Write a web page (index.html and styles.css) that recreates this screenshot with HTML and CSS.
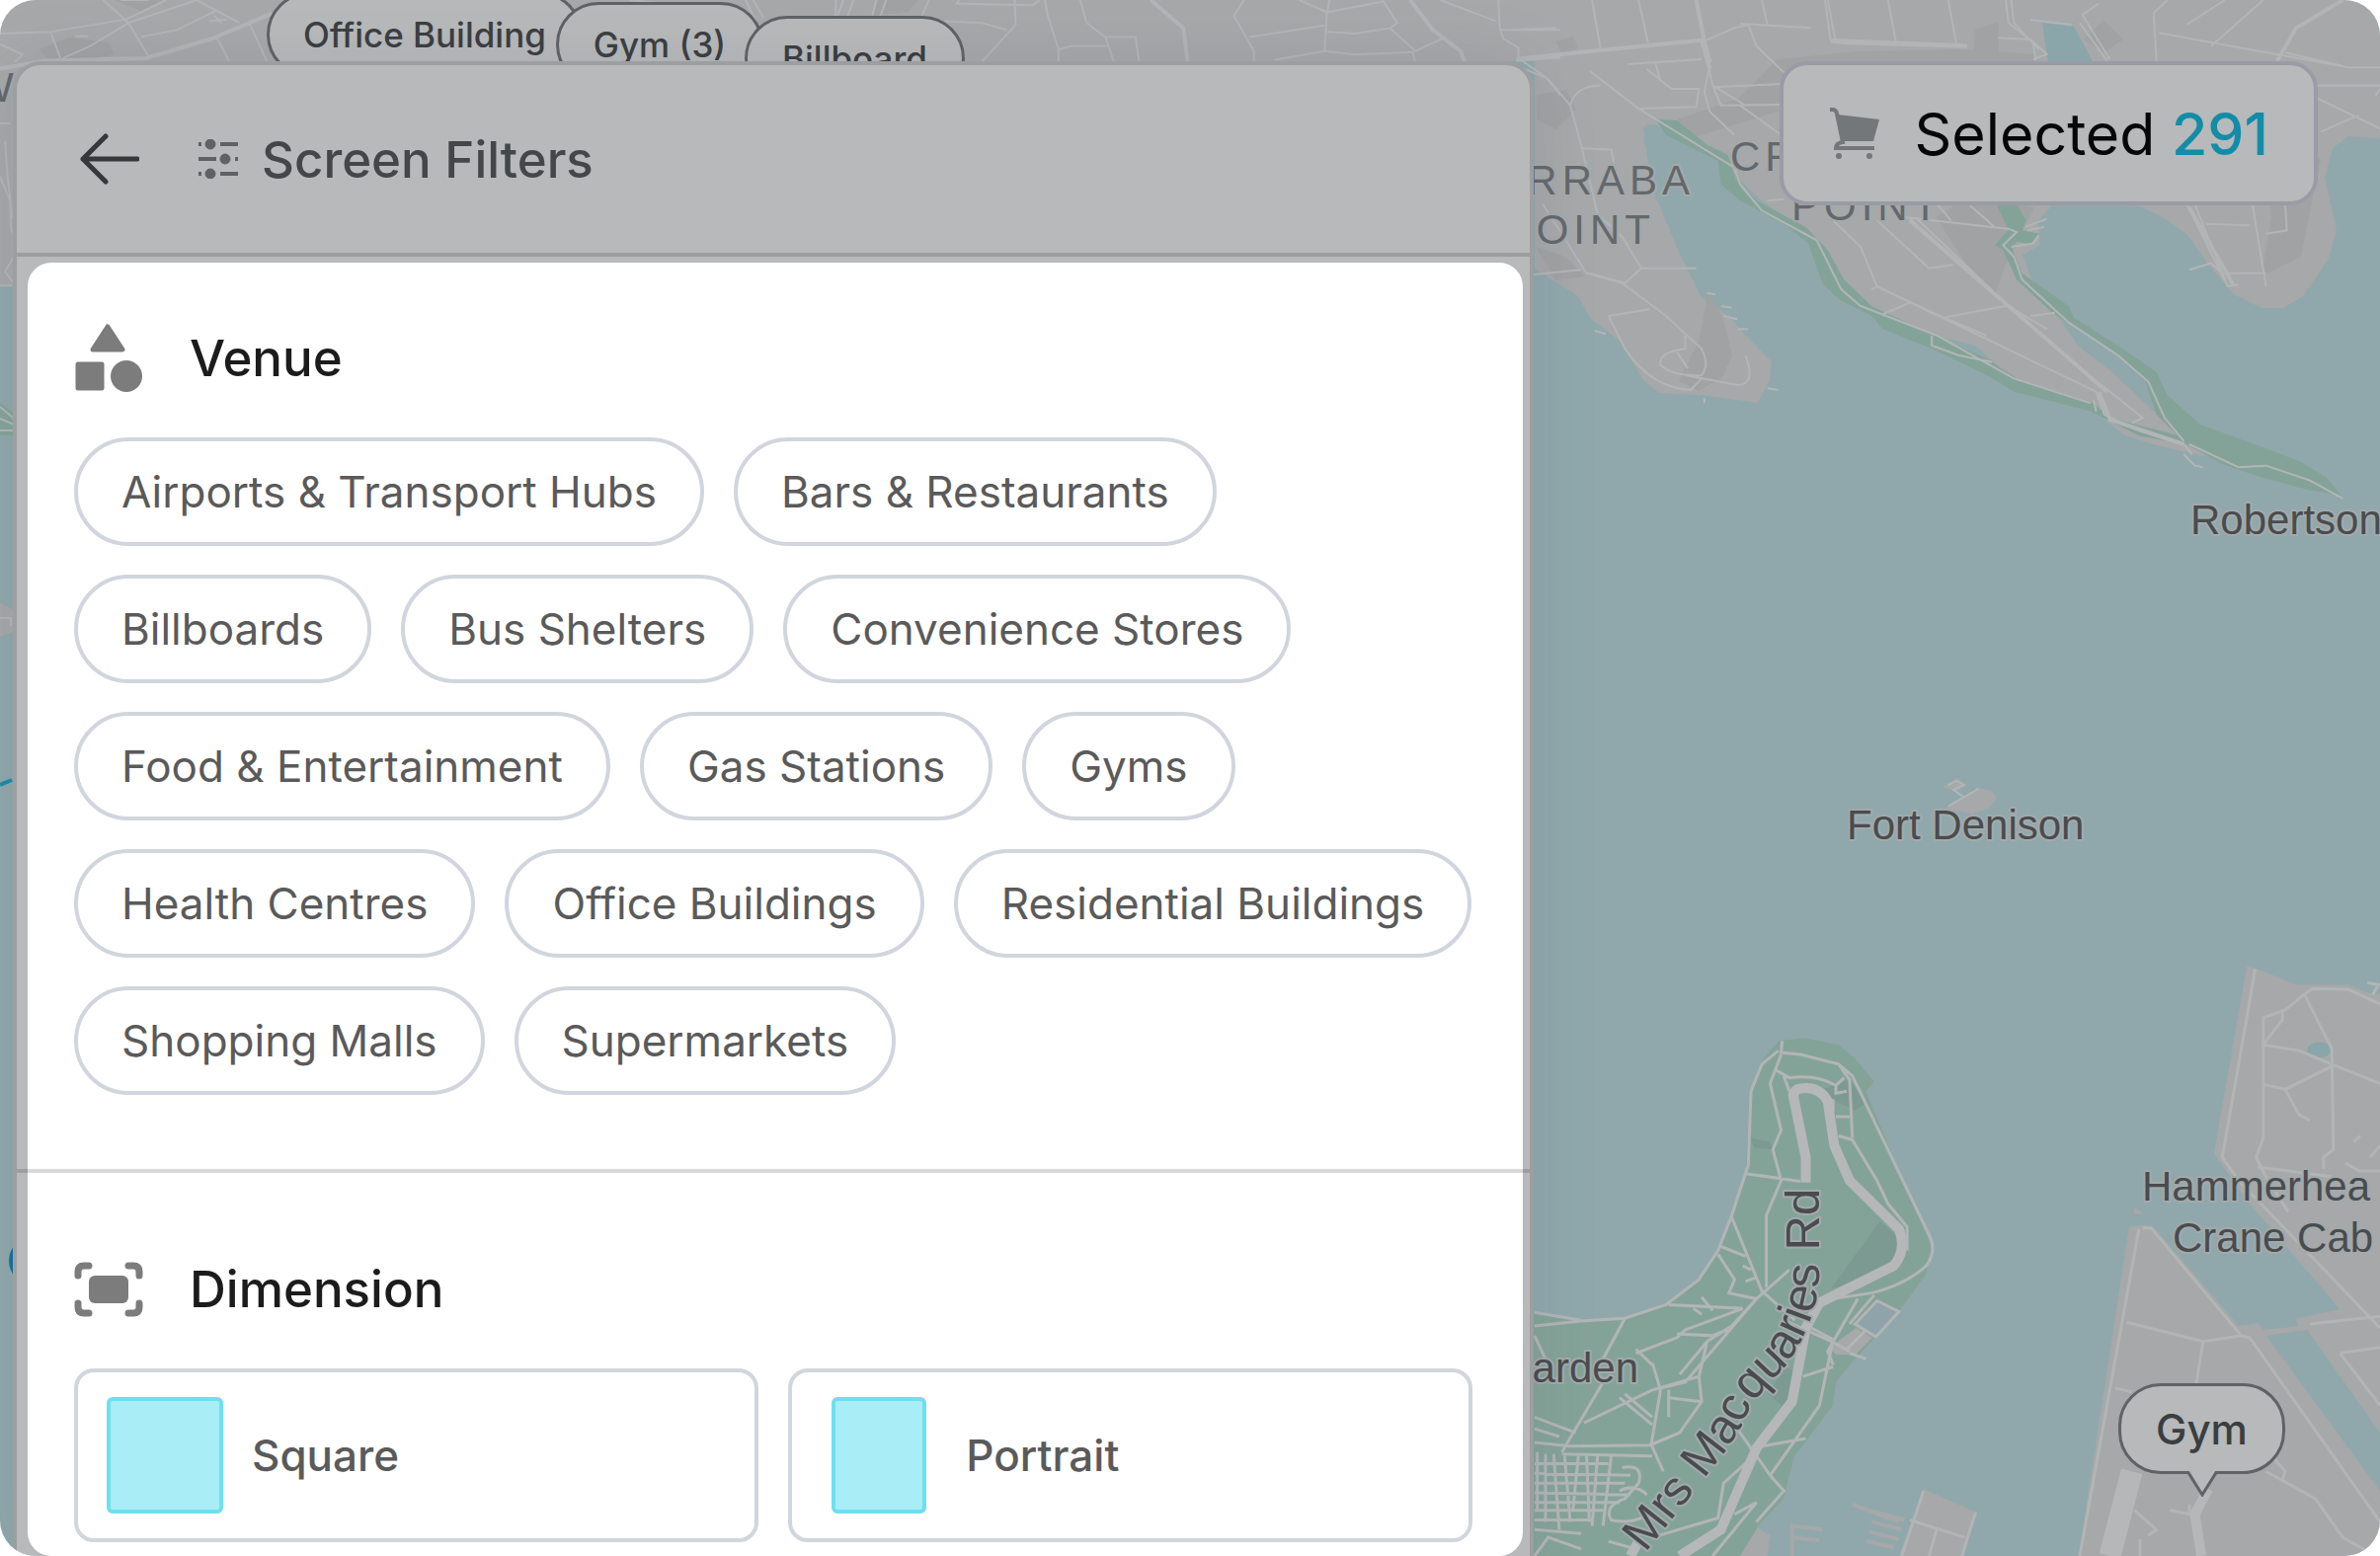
FILE: index.html
```html
<!DOCTYPE html>
<html lang="en">
<head>
<meta charset="utf-8">
<title>Screen Filters</title>
<link rel="stylesheet" href="styles.css">
</head>
<body>
<main class="stage">
  <svg class="map" viewBox="0 0 2410 1576" preserveAspectRatio="xMidYMid slice" role="img" aria-label="Harbour map">
    <rect class="water" width="2410" height="1576"/>

    <!-- north shore -->
    <path class="land" d="M0 0H2410V140L2378 138L2362 150L2354 180L2366 232L2358 262L2332 300L2312 312L2290 312L2262 298L2236 268L2215 238L2190 220L2166 209L2080 206L2063 224L2066 248L2048 258L2060 290L2085 322L2104 350L2140 378L2178 414L2200 430L2240 460L2230 462L2180 450L2150 440L2110 408L2040 385L2000 350L1908 327L1860 300L1845 265L1828 236L1780 200L1745 165L1735 150L1664 128L1668 160L1682 212L1700 255L1722 300L1750 320L1768 340L1794 365L1792 385L1780 408L1722 400L1680 398L1664 385L1640 345L1610 322L1598 300L1554 272V62H1300L14 290H0Z"/>
    <g class="shade">
      <path d="M1680 150L1700 120L1760 100L1800 60L1880 52L1990 50L2060 55L2080 80L1900 110L1810 110Z"/>
      <path d="M1730 296l14 24 10 40-10 22-24 14-20-10 20-40z"/>
      <path d="M2000 195l60 15-30 60-10 30-20-20-40-60z"/>
      <path d="M2350 160l-20 100-40 20 10-60-5-70z"/>
      <path d="M1556 96l30-5 10 20-20 20-20-10zM1555 250l30 10 20 20-30 4zM1575 42l18-5 5 12-16 6z"/>
      <path d="M2000 30l24-8 0 30-26 6zM2130 20l20 20-20 14-20-14z"/>
      <path d="M40 50l30-12 40 5 6 12-30 6-38-2zM115 0l50 0-20 12z"/>
      <path d="M890 0h40l-10 12-38 4z"/>
    </g>
    <path class="lake" d="M2068 23L2100 27L2120 64L2074 64Z"/>

    <g transform="translate(1540 0) scale(.55485 .33333)">
      <path class="water" d="M228 378L250 380L300 450L365 490L360 560L400 640L490 690L540 790L560 880L620 950L660 1000L560 1010L460 1100L455 1095L400 1000L350 900L310 810L280 700L245 600L240 480L224 430Z"/>
      <path class="park" d="M246 362L285 366L340 440L378 470L392 545L430 610L520 690L560 760L590 850L640 930L750 1015L850 1090L910 1155L1045 1225L1075 1270L1205 1325L1215 1350L1130 1325L1040 1250L900 1190L850 1140L750 1060L660 1000L640 960L580 910L550 860L525 740L480 680L400 610L365 560L360 490L300 440L265 410Z"/>
      <path class="park" d="M868 620H905L922 668L915 700L945 710L930 740L905 735L895 750L915 830L1000 930L1010 965L1090 1050L1160 1130L1180 1200L1240 1290L1340 1350L1420 1400L1470 1450L1497 1505L1440 1490L1350 1450L1280 1410L1215 1350L1160 1260L1140 1160L1075 1060L970 950L905 850L880 760L865 745L890 700Z"/>
      <g class="road">
        <path d="M0 205L50 240L90 320L110 440L140 650L185 720L220 815M40 620L120 830L185 860L265 960L330 1060Q345 1110 330 1140Q280 1145 255 1110Q250 1070 300 1060L300 1020M160 960L235 940M160 960L190 1060Q240 1180 310 1185L330 1150M410 1080Q430 1170 395 1170L300 1140M285 1070L305 1120M90 320Q100 260 145 260M110 450L165 455L170 495M20 835L110 820M125 830L190 860L220 815H320"/>
        <path d="M130 0L145 145M215 0L232 130M440 0L450 75M555 0L565 120L805 135M560 0L575 130M670 0L685 130M780 0L795 135M400 72L530 85M0 90L65 85M335 125L390 85L415 75L430 140L480 220M195 195L330 180M245 190L255 245M125 215L215 330L320 325L325 270L275 270L230 210M340 180L350 260L410 320M350 265L475 255M345 200L335 280L345 340L390 410M350 260L365 320L480 318M400 320L475 410"/>
        <path d="M215 330L390 510L400 560L440 640L540 730L585 880L620 930L760 1020L900 1150L1040 1225M450 610L480 605M570 670L620 750L650 870L640 880M650 870L770 965L885 930M655 875L1050 1190M650 670L745 815L790 805M710 665L1060 1180M720 660L890 930L960 1000M790 790L830 845M660 955L710 920L850 1020M760 620L785 670M820 625L865 690M700 660L860 690L890 695L905 705L880 745L900 780L915 850L1000 980L1090 1080L1145 1160L1175 1270L1210 1340M930 960L975 950M1060 1170L1135 1270L1115 1285M1050 1190L1065 1260L1130 1310L1210 1350L1225 1380M1045 1215L1050 1250M1220 1350L1310 1420L1360 1415L1440 1460L1500 1515"/>
        <path d="M885 0L890 70L935 130L940 185M895 0L900 70L945 150M930 60L1005 75M1020 70L1070 185M1055 10L1025 45L1045 100L1075 180M1180 0L1155 40L1160 185M1285 0L1215 75M1355 0L1260 140M1165 100L1510 205H1568M1395 160L1500 200M870 115L930 120L960 165L935 180M1455 300L1568 390M1460 400L1530 350M1450 260H1568M1560 290L1568 270M1215 620L1290 870L1310 865M1230 620L1285 850M1335 620L1360 870M1395 625L1398 700L1360 710M1250 680L1330 685M1220 820L1260 800L1280 830L1360 830M750 1020V1050L800 1080L860 1100"/>
        <path d="M920 690L960 665M925 700L955 690M895 750L935 740L945 715M340 890L355 895M365 930L385 935M370 960L395 970M395 1000H415M450 1180L470 1185M335 1210V1225M135 1005L155 1015M1210 1380L1230 1415L1245 1420"/>
      </g>
      <g class="road road-major">
        <path d="M0 178L130 155L330 122L345 210M320 0L335 125L345 190M565 125L600 130L815 140M1500 0L1415 85L1380 185"/>
        <path d="M1220 630L1300 865M710 670L1070 1190M1055 1190L1075 1275L1210 1350"/>
      </g>
    </g>

    <g transform="translate(0 0) scale(.5102 .35714)">
      <g class="road">
        <path d="M0 95L100 90L250 55L330 0M205 0L255 65L180 130L125 165M255 65L295 160M255 65L390 0L475 65M280 105L350 85L430 30M100 90L120 165M295 0H240M430 105L455 175M495 65L530 175M0 125L45 155L30 175M150 103H175M415 60L450 55M425 45L440 65M0 350H20M10 400L15 500L25 620M0 500L20 570L22 650L40 700L10 770L25 800M0 810H25M1480 0L1500 60M1495 0L1515 50M1250 0L1300 8"/>
      </g>
      <path class="road road-major" d="M0 195L90 172L290 165L420 110L540 38"/>
    </g>
    <g transform="translate(780 0) scale(.5102 .35714)">
      <g class="road">
        <path d="M130 0V40L120 70M145 0L130 60M210 0L200 60M165 0L150 60M230 0L215 60M315 0L295 65M485 0L487 70L420 175M375 0L370 10L520 15L535 0M345 60L420 65L470 85M545 0L550 40L572 140V175M615 0L628 65L665 105L682 175M665 105H725L732 175M572 140L600 130H670M940 0L920 45L960 145V175M950 105L1100 72M1050 0L1105 35L1100 145L1000 170M1110 0L1105 35L1215 5M1105 90L1160 95L1230 80L1280 145L1340 105M1100 145L1160 155L1275 148L1280 175M1215 0L1245 65L1230 80M1330 0L1440 60M1445 0L1448 80L1455 110L1485 135V170M1450 85H1568M1490 170L1540 220L1568 270"/>
      </g>
      <g class="road road-major"><path d="M755 0L820 80L828 175M1270 0L1315 85L1370 145L1378 175M1480 170L1568 160"/></g>
    </g>

    <!-- Fort Denison -->
    <g transform="translate(1540 500) scale(.55485 .33333)">
      <path class="land" d="M770 890L797 865L815 885L795 905ZM775 955L835 892L860 905L868 925L855 955L825 975Z"/>
      <path class="road" d="M780 885L795 872L808 885L790 900L808 922M780 950L835 897"/>
    </g>

    <!-- Botanic garden, Macquarie point and Garden Island -->
    <g transform="translate(1540 960) scale(.55485 .39286)">
      <path class="park" d="M0 940L110 960L190 955L265 915L325 850L360 780L385 690L410 580L418 370L440 290L470 240L520 232L580 250L610 285L645 345L630 370L680 540L750 770L740 840L695 930L610 1060L575 1120L570 1180L500 1310L490 1360L480 1420L430 1495L440 1568H0Z"/>
      <path class="park-dark" d="M655 705L700 760L690 820L565 880ZM420 490l35 10 5 20-35-5zM450 1150l35-70 20 20-20 90zM540 370l60-30 30 60-20 20z"/>
      <path class="land" d="M400 1568L432 1495L455 1515L450 1568ZM735 1395L830 1455L805 1568H690ZM563 1030L612 980L642 1005L610 1050L575 1048ZM1325 48L1340 52L1415 95L1510 95L1545 115L1568 120V1250L1435 985L1360 1000L1568 1400V1568H1018L1110 720L1135 715L1155 720L1310 975L1345 968L1360 992L1420 978L1415 955L1495 932L1330 660L1265 530Z"/>
      <path class="land" d="M1120 670L1137 685L1118 687Z"/>
      <ellipse class="lake" cx="1457" cy="263" rx="22" ry="20"/>
      <path class="pool" d="M650 910L690 938L648 1003L610 970Z"/>
      <g class="road road-path">
        <path d="M477 240L475 270L510 275L580 300L605 330L745 740Q760 780 740 820Q700 870 640 890L545 910M470 265L440 300L420 370L415 560L385 690L360 780L325 855L265 920L190 955L110 962L25 975M475 275L455 350L475 470L460 520L475 600L448 690V875M25 940L110 960M465 315L490 335Q540 325 575 355L590 335M480 330L490 370M580 300L600 340L605 490M575 355L575 375L595 370M570 390V420M575 435H600M580 485L605 495L650 600L670 660L705 720V780M410 582L510 602M385 695L440 885L500 960M360 790L390 855L380 890L430 905L490 830M365 770L410 795M270 920L405 930M430 905L385 975L340 1015L290 1100M190 955L150 1060M405 930L300 985L285 1005L210 1045M285 995L350 1000L385 980M430 905L300 1120L240 1140L115 1225M340 1015L325 1105L330 1170L290 1250L240 1280M240 1070L255 1140L238 1280L260 1350M150 1120L75 1300M180 1160L240 1230M190 1150L240 1210M210 1035L240 1075M325 1105L240 1140M330 1170L270 1160M270 1140V1210M480 960L560 1010L600 1040M530 980L570 1010L545 1180L510 1250L455 1360L480 1400L430 1480M615 905L560 1040L570 1075M645 895L600 970M515 1105L570 1080M440 1285L520 1265M395 1240L460 1370M425 1310L370 1380L360 1470L240 1520M390 1460L430 1430L350 1568M25 1000L45 1060M25 1210L100 1250M25 1240L70 1260M25 1275L90 1285L235 1282L290 1250M75 1305L240 1310M330 900L350 935M405 820L420 830M410 860L430 850M315 930L330 945"/>
        <path d="M30 1300V1450M45 1305V1480M60 1305L70 1500M80 1310L90 1480M105 1310L95 1450M120 1310L125 1480M140 1310L130 1490M165 1310L150 1490M25 1330H160M25 1355L200 1360M25 1380H190M25 1405L200 1410M25 1430H180M25 1450H150M25 1475H130M25 1500L110 1510M185 1340Q225 1330 215 1380L190 1420Q150 1440 165 1475Q210 1490 240 1450M180 1400Q210 1380 230 1410M25 1568L50 1520L110 1550M160 1530L210 1550"/>
        <path d="M650 910L690 938L648 1003L610 970ZM595 1035L630 985M600 1045L630 1060M735 1400L695 1568M710 1475L810 1520M760 1495L745 1568M830 1455L805 1568"/>
        <path d="M1340 55L1325 180L1280 540L1310 600L1568 980M1430 120L1480 260L1483 520L1465 540V570M1430 120L1395 160L1355 180V490L1342 540L1360 590L1400 680M1430 120L1445 105L1510 107L1568 145M1390 160V185L1355 250L1420 265L1480 300L1568 350M1355 352L1395 365L1420 430L1440 445M1395 365L1480 305M1345 565L1480 590M1505 555L1530 575H1568M1550 540L1568 510M1520 500L1532 485M1545 90L1565 95L1555 120M1128 725L1020 1568M1135 722H1150L1315 1000L1330 1005L1568 1480M1105 965L1245 1015L1315 1000M1245 1015L1232 1130M1085 1135L1115 1145M1440 970L1568 950M1495 1045L1568 1030M1495 1045L1568 1180M1360 1350L1450 1420L1500 1520L1560 1568M1390 1370L1395 1350L1370 1310M1120 1450L1160 1500L1145 1515M1185 1450L1220 1460V1435M1130 1525V1568"/>
      </g>
      <path class="pier" d="M605 1435L690 1480M635 1450L700 1475M640 1480L695 1500M635 1505L690 1525M630 1530L680 1545M495 1485V1568M495 1490L550 1500M495 1520L545 1528M1355 990L1425 980"/>
      <g class="road road-drive">
        <path d="M520 605V540L497 380Q500 362 515 362Q545 358 560 395L572 510L600 600L690 725Q705 780 680 820L545 915L520 980L495 1170L430 1290L365 1500L290 1568M215 1530L200 1568"/>
      </g>
      <path class="road road-quay" d="M1115 1350L1075 1568"/>
      <path class="road road-drive" d="M1255 1395L1230 1460L1242 1568"/>
    </g>

    <!-- west edge -->
    <path class="park" d="M0 408L14 418V441H0Z"/>
    <path class="land" d="M0 610L14 618V640L0 645Z"/>
    <path class="road" d="M0 412L14 424M0 424L14 430M0 436H14M0 626H11V634"/>
    <path class="ferry" d="M0 795L12 790"/>
    <circle class="stop" cx="34" cy="1277" r="25"/>

    <g class="label">
      <text x="2218" y="541">Robertson</text>
      <text x="1870" y="850">Fort Denison</text>
      <text x="2169" y="1216">Hammerhea</text>
      <text x="2200" y="1268">Crane Cab</text>
      <text x="1659" y="1400" text-anchor="end">arden</text>
      <text class="label-area" x="1716" y="197" text-anchor="end">RRABA</text>
      <text class="label-area" x="1676" y="247" text-anchor="end">OINT</text>
      <text class="label-area" x="1752" y="173">CR</text>
      <text class="label-area" x="1814" y="223">POINT</text>
      <text class="label-area" x="-26" y="103">W</text>
      <path id="drive" fill="none" stroke="none" d="M1666 1573L1734 1487Q1762 1452 1772 1425Q1790 1402 1808 1384Q1842 1335 1842 1290V1100"/>
      <text class="label-road"><textPath href="#drive">Mrs Macquaries Rd</textPath></text>
    </g>
  </svg>

  <button class="pin pin-office" type="button">Office Building</button>
  <button class="pin pin-gyms" type="button">Gym (3)</button>
  <button class="pin pin-billboard" type="button">Billboard</button>
  <button class="pin pin-gym" type="button">Gym
    <svg class="pin-tip" viewBox="0 0 32 26" aria-hidden="true"><path d="M1 0L16 24L31 0"/></svg>
  </button>

  <section class="panel" aria-labelledby="panel-title">
    <header class="panel-header">
      <button class="back" type="button" aria-label="Back">
        <svg viewBox="0 0 60 52" aria-hidden="true"><path d="M26 3L3 26L26 49M3 26H58"/></svg>
      </button>
      <h1 class="panel-title" id="panel-title">
        <svg viewBox="0 0 44 40" aria-hidden="true">
          <path d="M2 5H5M24 5H42M2 20H20M39 20H42M2 35H5M24 35H42"/>
          <circle cx="14" cy="5" r="5"/><circle cx="29" cy="20" r="5"/><circle cx="14" cy="35" r="5"/>
        </svg>
        Screen Filters
      </h1>
    </header>

    <div class="panel-body">
      <section class="group">
        <h2 class="group-title">
          <svg viewBox="0 0 70 70" aria-hidden="true">
            <path d="M34 3L49 26H19Z" stroke-width="5"/>
            <rect x="4" y="41" width="24" height="24" stroke-width="5"/>
            <circle cx="53" cy="53" r="16" stroke="none"/>
          </svg>
          Venue
        </h2>
        <div class="chips">
          <button class="chip" type="button">Airports &amp; Transport Hubs</button>
          <button class="chip" type="button">Bars &amp; Restaurants</button>
          <button class="chip" type="button">Billboards</button>
          <button class="chip" type="button">Bus Shelters</button>
          <button class="chip" type="button">Convenience Stores</button>
          <button class="chip" type="button">Food &amp; Entertainment</button>
          <button class="chip" type="button">Gas Stations</button>
          <button class="chip" type="button">Gyms</button>
          <button class="chip" type="button">Health Centres</button>
          <button class="chip" type="button">Office Buildings</button>
          <button class="chip" type="button">Residential Buildings</button>
          <button class="chip" type="button">Shopping Malls</button>
          <button class="chip" type="button">Supermarkets</button>
        </div>
      </section>

      <section class="group group-dimension">
        <h2 class="group-title">
          <svg viewBox="0 0 70 70" aria-hidden="true">
            <path class="corners" d="M15 11H10Q4 11 4 17V21M55 11H60Q66 11 66 17V21M15 59H10Q4 59 4 53V49M55 59H60Q66 59 66 53V49"/>
            <rect x="15" y="21" width="40" height="28" rx="6" stroke="none"/>
          </svg>
          Dimension
        </h2>
        <div class="cards">
          <button class="card" type="button"><span class="shape"><span class="swatch"></span></span>Square</button>
          <button class="card" type="button"><span class="shape"><span class="swatch swatch-portrait"></span></span>Portrait</button>
        </div>
      </section>
    </div>
  </section>

  <button class="selected" type="button">
    <svg viewBox="0 0 52 52" aria-hidden="true">
      <path class="cart-basket" d="M9 7L51 12L45 34H13Z"/>
      <path class="cart-frame" d="M1 2H4Q7 2 8 6L14 35Q7 36 7 41H46"/>
      <circle cx="10" cy="49" r="3"/><circle cx="41" cy="49" r="3"/>
    </svg>
    <span>Selected <span class="count">291</span></span>
  </button>
</main>
</body>
</html>
```

FILE: styles.css
```css
:root {
  --line: #d9d9d9;
  --control-line: #d1d5dd;
  --icon: #7c7c7c;
  --dim: rgba(18, 22, 26, 0.3);
}

* {
  box-sizing: border-box;
}

body {
  margin: 0;
  background: #fff;
  font-family: Inter, "Liberation Sans", sans-serif;
}

button {
  font: inherit;
  cursor: pointer;
}

h1,
h2 {
  margin: 0;
  font-weight: 500;
}

.stage {
  position: relative;
  isolation: isolate;
  display: flex;
  justify-content: space-between;
  align-items: flex-start;
  min-height: 100vh;
  padding: 62px 63px 0 13px;
  overflow: hidden;
  border-radius: 36px;
}

/* Map */
.map {
  position: absolute;
  inset: 0;
  z-index: -1;
  width: 100%;
  height: 100%;
}

.water { fill: #c7e7ea; }
.pool { fill: #c7e0e8; }
.lake { fill: #bfe4e8; }
.land { fill: #e7e7e7; }
.shade { fill: #dedede; }
.park { fill: #b7e0ce; }
.park-dark { fill: #abd3c4; }
.stop { fill: #129ae0; }

.road,
.pier,
.ferry {
  fill: none;
  stroke: #f8f9fa;
  stroke-width: 2;
}

.road path,
path.road,
.pier {
  vector-effect: non-scaling-stroke;
}

.road-path { stroke-width: 3; }
.road-major { stroke-width: 4; }
.road-drive { stroke-width: 10; stroke: #fdfdfd; }
.road-quay { stroke-width: 22; stroke: #fdfdfd; }
.pier { stroke: #e7e7e7; stroke-width: 4; }
.ferry { stroke: #19c0ea; stroke-width: 4; }

.label {
  font: 400 42px "Liberation Sans", Arial, sans-serif;
  fill: #626466;
  stroke: #e4e9ea;
  stroke-width: 4;
  stroke-linejoin: round;
  paint-order: stroke;
}

.label-area {
  letter-spacing: 5px;
  fill: #8a8c8e;
}

.label-road {
  font-size: 49px;
}

/* Map pins */
.pin {
  position: absolute;
  height: 86px;
  padding: 0;
  border: 3px solid #828486;
  border-radius: 43px;
  background: #fff;
  color: #4e5052;
  font-size: 35px;
  font-weight: 500;
}

.pin-office { left: 270px; top: -8px; width: 320px; }
.pin-gyms { left: 563px; top: 2px; width: 210px; }
.pin-billboard { left: 754px; top: 16px; width: 223px; }

.pin-gym {
  right: 96px;
  bottom: 83px;
  width: 169px;
  height: 92px;
  font-size: 42px;
}

.pin-tip {
  position: absolute;
  left: 50%;
  top: 100%;
  width: 32px;
  height: 26px;
  margin-left: -16px;
  fill: #fff;
  stroke: #828486;
  stroke-width: 3;
}

/* Filter panel */
.panel {
  position: relative;
  flex: 0 0 66%;
  align-self: stretch;
  border: 4px solid var(--line);
  border-bottom: 0;
  border-radius: 28px 28px 0 0;
  background: #fff;
  box-shadow: 0 0 70px rgba(60, 60, 110, 0.1);
}

.panel-header {
  display: flex;
  align-items: center;
  gap: 58px;
  height: 194px;
  padding: 0 64px;
  border-bottom: 4px solid var(--line);
}

.back {
  display: flex;
  width: 60px;
  padding: 0;
  border: 0;
  background: none;
}

.back svg {
  width: 60px;
  height: 52px;
  fill: none;
  stroke: #46484a;
  stroke-width: 5;
  stroke-linecap: round;
  stroke-linejoin: round;
}

.panel-title {
  display: flex;
  align-items: center;
  gap: 22px;
  color: #5a5c5e;
  font-size: 51px;
}

.panel-title svg {
  width: 44px;
  height: 40px;
  fill: #818285;
  stroke: #818285;
  stroke-width: 4;
}

.panel-title circle {
  stroke-width: 1;
}

/* Dims everything around the filter list */
.panel-body::after {
  content: "";
  position: absolute;
  z-index: 2;
  inset: 200px 7px 0 11px;
  border-radius: 24px;
  box-shadow: 0 0 0 4000px var(--dim);
  pointer-events: none;
}

.group {
  padding: 68px 58px 75px;
}

.group-dimension {
  padding-top: 83px;
  padding-bottom: 14px;
  border-top: 4px solid var(--line);
}

.group-title {
  display: flex;
  align-items: center;
  gap: 47px;
  margin-bottom: 45px;
  color: #1c1c1c;
  font-size: 51px;
  line-height: 70px;
}

.group-title svg {
  width: 70px;
  height: 70px;
  fill: var(--icon);
  stroke: var(--icon);
  stroke-linejoin: round;
}

.group-title .corners {
  fill: none;
  stroke-width: 7;
  stroke-linecap: round;
}

.chips {
  display: flex;
  flex-wrap: wrap;
  gap: 29px 30px;
}

.chip {
  height: 110px;
  padding: 0 44px;
  border: 4px solid var(--control-line);
  border-radius: 55px;
  background: #fff;
  color: #5a5a5a;
  font-size: 44px;
}

.cards {
  display: grid;
  grid-template-columns: 1fr 1fr;
  gap: 30px;
}

.card {
  display: flex;
  align-items: center;
  gap: 29px;
  height: 176px;
  padding: 0 29px;
  border: 4px solid var(--control-line);
  border-radius: 20px;
  background: #fff;
  color: #5a5a5a;
  font-size: 44px;
  font-weight: 500;
}

.shape {
  display: flex;
  justify-content: center;
  width: 118px;
}

.swatch {
  width: 118px;
  height: 118px;
  border: 4px solid #6fdff0;
  border-radius: 6px;
  background: #a9edf6;
}

.swatch-portrait {
  width: 96px;
}

/* Selection summary */
.selected {
  display: flex;
  align-items: center;
  gap: 34px;
  height: 146px;
  padding: 0 46px;
  border: 4px solid #d4d6e2;
  border-radius: 28px;
  background: #fff;
  color: #000;
  font-size: 59px;
}

.selected svg {
  width: 52px;
  height: 52px;
  fill: #a0a1a3;
}

.cart-frame {
  fill: none;
  stroke: #a0a1a3;
  stroke-width: 4;
}

.count {
  color: #15bfe5;
  font-weight: 500;
}
```
